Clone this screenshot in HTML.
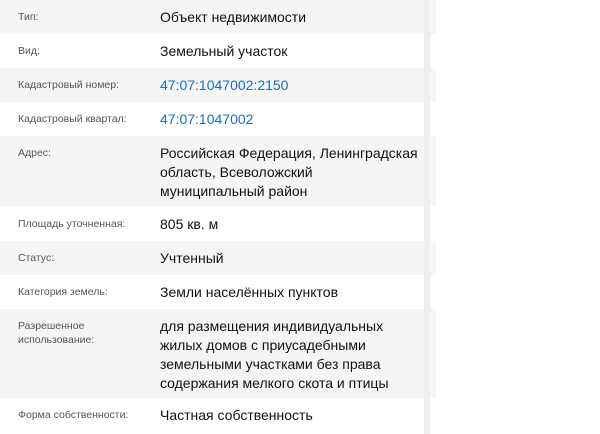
<!DOCTYPE html><html><head><meta charset="utf-8"><style>
body{margin:0;width:600px;height:434px;overflow:hidden;background:#fff;font-family:"Liberation Sans",Arial,sans-serif;position:relative}
.r{position:absolute;left:0;width:436px;box-sizing:border-box}
.g{background:#f5f5f5}
.l{position:absolute;left:18px;font-size:10.5px;color:#555;line-height:14px}
.v{position:absolute;left:160px;font-size:14px;color:#111;line-height:19px;white-space:nowrap}
.a{color:#1f6fb0}
.sb{position:absolute;left:424px;top:0;width:6px;height:434px;background:#eceef4}
</style></head><body>
<div class="r g" style="top:0;height:34px"><div class="l" style="top:10px">Тип:</div><div class="v" style="top:8px">Объект недвижимости</div></div>
<div class="r" style="top:34px;height:34px"><div class="l" style="top:10px">Вид:</div><div class="v" style="top:8px">Земельный участок</div></div>
<div class="r g" style="top:68px;height:34px"><div class="l" style="top:10px">Кадастровый номер:</div><div class="v a" style="top:8px">47:07:1047002:2150</div></div>
<div class="r" style="top:102px;height:34px"><div class="l" style="top:10px">Кадастровый квартал:</div><div class="v a" style="top:8px">47:07:1047002</div></div>
<div class="r g" style="top:136px;height:70px"><div class="l" style="top:10px">Адрес:</div><div class="v" style="top:8px">Российская Федерация, Ленинградская<br>область, Всеволожский<br>муниципальный район</div></div>
<div class="r" style="top:206px;height:35px"><div class="l" style="top:11px">Площадь уточненная:</div><div class="v" style="top:9px">805 кв. м</div></div>
<div class="r g" style="top:241px;height:34px"><div class="l" style="top:10px">Статус:</div><div class="v" style="top:8px">Учтенный</div></div>
<div class="r" style="top:275px;height:34px"><div class="l" style="top:10px">Категория земель:</div><div class="v" style="top:8px">Земли населённых пунктов</div></div>
<div class="r g" style="top:309px;height:89px"><div class="l" style="top:10px">Разрешенное<br>использование:</div><div class="v" style="top:8px">для размещения индивидуальных<br>жилых домов с приусадебными<br>земельными участками без права<br>содержания мелкого скота и птицы</div></div>
<div class="r" style="top:398px;height:36px"><div class="l" style="top:10px">Форма собственности:</div><div class="v" style="top:8px">Частная собственность</div></div>
<div class="sb"></div>
</body></html>
